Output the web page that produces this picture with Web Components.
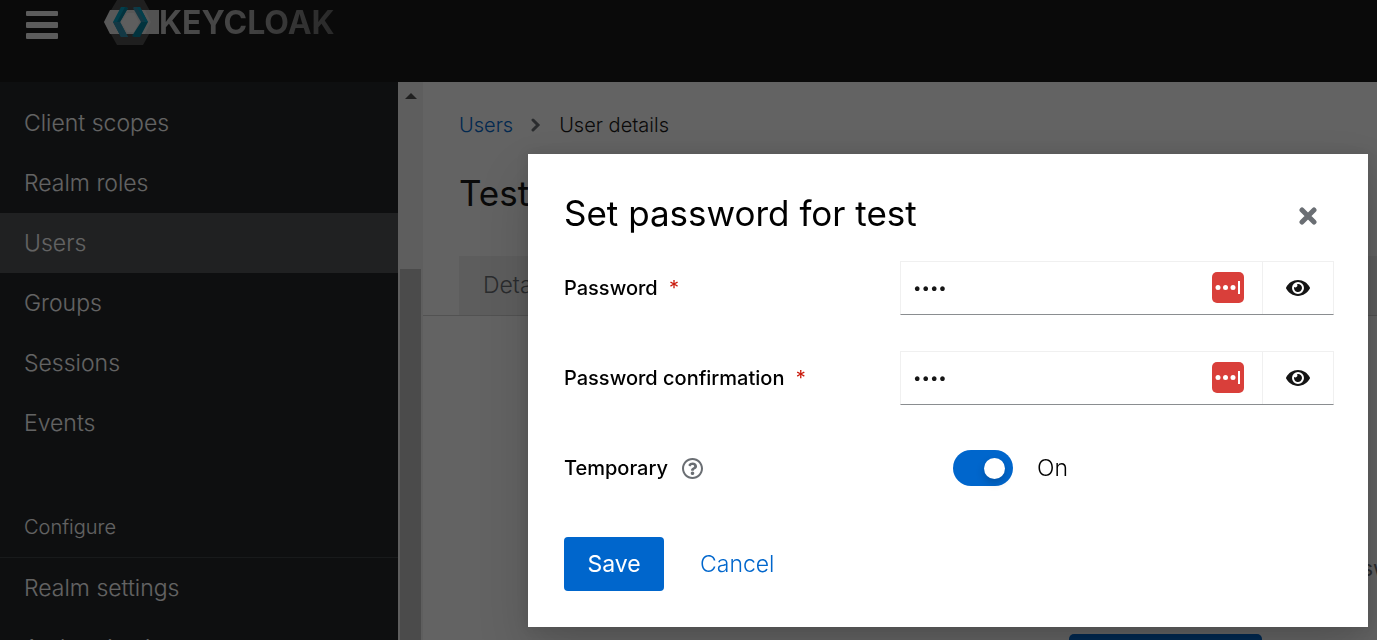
<!DOCTYPE html>
<html lang="en">
<head>
<meta charset="utf-8">
<title>Keycloak Administration Console</title>
<style>
  html, body { margin: 0; height: 100%; }
  body { font-family: Inter, "Open Sans", sans-serif; color: #151515; overflow: hidden; background: #fff; }
</style>
</head>
<body>
<kc-app></kc-app>
<script>
const define = (name, html) => {
  const tpl = document.createElement('template');
  tpl.innerHTML = html;
  customElements.define(name, class extends HTMLElement {
    constructor() {
      super();
      this.attachShadow({ mode: 'open' }).append(tpl.content.cloneNode(true));
    }
  });
};

define('kc-logo', `
<style>
  :host { display: flex; align-items: center; }
  svg { display: block; }
  span { font-size: 32px; line-height: 40px; font-weight: 700; color: transparent;
    background: linear-gradient(90deg, #c4c4c4, #a8a8a8 50%, #666); background-clip: text; -webkit-background-clip: text; }
</style>
<svg width="56" height="46" viewBox="0 0 56 46" aria-hidden="true">
  <path fill="#4d4d4d" d="M14 0h27l12 22-13 23H14L1 22z"/>
  <path fill="#e2e2e2" d="M7 10h49v24H7L1 22z"/>
  <path fill="#d2d2d2" d="M42 10h14v24H42l6-12z"/>
  <path fill="#f2f2f2" d="M24 13h7l5 9-5 10h-7l-6-10z"/>
  <path fill="#00a0c2" d="M18 7h4l3 1-8 14 8 15h-7l-8-15z"/>
  <path fill="#2f8fad" d="M10 22h7l8 15h-7z"/>
  <path fill="#00819e" d="M22 7l3 1-8 14h-3z"/>
  <path fill="#2f8fad" d="M31 7h6l8 15h-7l-8-14z"/>
  <path fill="#00819e" d="M38 22h7l-8 15h-6l-2-1z"/>
  <path fill="#00a0c2" d="M37 7l8 15h-3L34 7z"/>
</svg>
<span>KEYCLOAK</span>`);

define('kc-masthead', `
<style>
  :host { display: block; height: 82px; background: #151515; flex: none; }
  div { display: flex; align-items: center; height: 46px; padding-left: 26px; gap: 45px; }
  button { border: 0; padding: 4px 0 0; background: none; display: block; }
  svg { display: block; }
</style>
<div>
  <button aria-label="Global navigation">
    <svg width="32" height="28" viewBox="0 0 32 28" fill="#ededed"><rect width="32" height="5" rx="1"/><rect y="11" width="32" height="6" rx="1"/><rect y="22" width="32" height="6" rx="1"/></svg>
  </button>
  <kc-logo></kc-logo>
</div>`);

define('kc-nav-item', `
<style>
  :host { display: block; }
  a { display: block; padding: 0 24px; font-size: 23px; line-height: 60px; font-weight: 300; color: #fff; text-decoration: none; }
  :host([current]) a { background: #4f5255; }
</style>
<a href="#"><slot></slot></a>`);

define('kc-sidebar', `
<style>
  :host { display: flex; flex: none; width: 423px; overflow: hidden; background: #f1f1f1; }
  nav { flex: 1; padding-top: 11px; background: #212427; }
  h2 { margin: 45px 0 0; padding: 0 24px; font-size: 20px; line-height: 59px; font-weight: 300; color: #fff; border-bottom: 1px solid #3c3f42; }
  .bar { width: 21px; padding: 11px 2px 0; display: flex; flex-direction: column; align-items: center; gap: 170px; }
  .bar i { flex: 1; width: 100%; background: #c1c1c1; }
  svg { display: block; flex: none; }
</style>
<nav>
  <kc-nav-item>Client scopes</kc-nav-item>
  <kc-nav-item>Realm roles</kc-nav-item>
  <kc-nav-item current>Users</kc-nav-item>
  <kc-nav-item>Groups</kc-nav-item>
  <kc-nav-item>Sessions</kc-nav-item>
  <kc-nav-item>Events</kc-nav-item>
  <h2>Configure</h2>
  <kc-nav-item>Realm settings</kc-nav-item>
  <kc-nav-item>Authentication</kc-nav-item>
</nav>
<div class="bar"><svg width="12" height="6"><path fill="#505050" d="M0 6l6-6 6 6z"/></svg><i></i></div>`);

define('kc-breadcrumb', `
<style>
  :host { display: flex; align-items: center; gap: 18px; font-size: 20px; line-height: 34px; font-weight: 300; }
  a { color: #06c; text-decoration: none; }
  svg { display: block; }
</style>
<a href="#">Users</a>
<svg width="10" height="14" viewBox="0 0 10 14" fill="none" stroke="#6a6e73" stroke-width="3" stroke-linecap="round"><path d="M2 2l5 5-5 5"/></svg>
<span>User details</span>`);

define('kc-empty-state', `
<style>
  :host { display: flex; flex-direction: column; align-items: center; width: 1485px; padding-top: 234px; }
  p { margin: 0 0 48px; font-size: 22px; line-height: 36px; font-weight: 400; color: #6a6e73; white-space: nowrap; }
  button { border: 0; border-radius: 5px; padding: 0 22px; font: 400 23px/54px Inter, sans-serif; color: #fff; background: #06c; }
</style>
<p>This user does not have any credentials. You can set password for this user.</p>
<button>Set password</button>`);

define('kc-user-page', `
<style>
  :host { display: block; flex: 1; min-width: 0; overflow: hidden; background: #fff; }
  header { padding: 26px 0 0 36px; }
  h1 { margin: 26px 0 38px; font-size: 35px; line-height: 50px; font-weight: 400; }
  .tabs { display: flex; padding-left: 36px; border-bottom: 1px solid #d2d2d2; }
  .tabs button { flex: 1; text-align: left; border: 0; margin: 0; padding: 0 24px; background: #f0f0f0; color: #6a6e73; font: 300 23px/59px Inter, sans-serif; }
</style>
<header><kc-breadcrumb></kc-breadcrumb><h1>Test</h1></header>
<div class="tabs" role="tablist"><button role="tab">Details</button></div>
<kc-empty-state></kc-empty-state>`);

define('kc-password-field', `
<style>
  :host { display: grid; grid-template-columns: 336px 1fr; align-items: center; }
  label { font-size: 20px; line-height: 30px; font-weight: 500; }
  label b { margin-left: 6px; font-weight: 400; color: #c9190b; }
  .group { display: flex; position: relative; height: 54px; box-sizing: border-box; border: 1px solid #f0f0f0; border-bottom-color: #8a8d90; }
  input { flex: 1; min-width: 0; border: 0; padding: 0 12px; background: none; color: #151515; font: 400 15px/30px Inter, sans-serif; outline: 0; }
  button { flex: none; width: 71px; border: 0; border-left: 1px solid #f0f0f0; padding: 0; background: none; display: grid; place-items: center; }
  .fill { position: absolute; right: 89px; top: 10px; }
  svg { display: block; }
</style>
<label for="pw"><slot></slot> <b aria-hidden="true">*</b></label>
<div class="group">
  <input id="pw" type="password" value="test">
  <svg class="fill" width="32" height="31" viewBox="0 0 32 31" aria-hidden="true"><rect width="32" height="31" rx="5" fill="#d93f3a"/><g fill="#fff"><circle cx="6" cy="15.500" r="2.500"/><circle cx="13.500" cy="15.500" r="2.500"/><circle cx="21" cy="15.500" r="2.500"/><path d="M26 9h2v13h-2z"/></g></svg>
  <button aria-label="Show password"><svg width="24" height="22" viewBox="0 0 576 512" fill="#151515"><path d="M572.520 241.400C518.290 135.590 410.930 64 288 64S57.680 135.640 3.480 241.410a32.350 32.350 0 0 0 0 29.190C57.710 376.410 165.070 448 288 448s230.320-71.640 284.520-177.410a32.350 32.350 0 0 0 0-29.190zM288 400a144 144 0 1 1 144-144 143.930 143.930 0 0 1-144 144zm0-240a95.310 95.310 0 0 0-25.310 3.790 47.850 47.850 0 0 1-66.900 66.900A95.780 95.780 0 1 0 288 160z"/></svg></button>
</div>`);

define('kc-switch-field', `
<style>
  :host { display: grid; grid-template-columns: 389px 1fr; align-items: center; height: 54px; }
  .name, .toggle { display: flex; align-items: center; }
  .name { gap: 14px; font-size: 20px; line-height: 30px; font-weight: 500; }
  .toggle { gap: 24px; font-size: 23px; line-height: 36px; font-weight: 300; }
  .name button { border: 0; padding: 0; background: none; }
  svg { display: block; }
  input { appearance: none; margin: 0; width: 60px; height: 36px; border-radius: 18px; background: #06c; display: grid; align-items: center; justify-items: end; padding: 0 8px; box-sizing: border-box; }
  input::before { content: ""; width: 21px; height: 21px; border-radius: 50%; background: #fff; box-shadow: 0 4px 8px rgba(3,3,3,.2); }
</style>
<div class="name"><label for="sw"><slot></slot></label>
<button aria-label="More info"><svg width="21" height="21" viewBox="8 8 496 496" fill="#6a6e73"><path d="M256 8C119.043 8 8 119.083 8 256c0 136.997 111.043 248 248 248s248-111.003 248-248C504 119.083 392.957 8 256 8zm0 448c-110.532 0-200-89.431-200-200 0-110.495 89.472-200 200-200 110.491 0 200 89.471 200 200 0 110.530-89.431 200-200 200zm107.244-255.200c0 67.052-72.421 68.084-72.421 92.863V300c0 6.627-5.373 12-12 12h-45.647c-6.627 0-12-5.373-12-12v-8.659c0-35.745 27.100-50.034 47.579-61.516 17.561-9.845 28.324-16.541 28.324-29.579 0-17.246-21.999-28.693-39.784-28.693-23.189 0-33.894 10.977-48.942 29.969-4.057 5.120-11.460 6.071-16.666 2.124l-27.824-21.098c-5.107-3.872-6.251-11.066-2.644-16.363C184.846 131.491 214.940 112 261.794 112c49.071 0 101.450 38.304 101.450 88.800zM298 368c0 23.159-18.841 42-42 42s-42-18.841-42-42 18.841-42 42-42 42 18.841 42 42z"/></svg></button></div>
<div class="toggle"><input id="sw" type="checkbox" role="switch" checked><span>On</span></div>`);

define('kc-modal', `
<style>
  :host { display: block; box-sizing: border-box; width: 840px; padding: 36px 34px 36px 36px; background: #fff; color: #000;
    box-shadow: 0 24px 48px rgba(3,3,3,.16), 0 0 12px rgba(3,3,3,.1); }
  header { display: flex; align-items: center; justify-content: space-between; padding-right: 17px; margin-bottom: 24px; }
  h2 { margin: 0; font-size: 35px; line-height: 47px; font-weight: 400; }
  header button { border: 0; padding: 4px 0 0; background: none; }
  svg { display: block; }
  form { display: flex; flex-direction: column; gap: 36px; }
  footer { display: flex; gap: 36px; margin-top: 6px; }
  footer button { border: 0; padding: 0; background: none; color: #06c; font: 300 23px/54px Inter, sans-serif; }
  footer .primary { width: 100px; border-radius: 4px; background: #06c; color: #fff; font-weight: 400; }
</style>
<header><h2><slot name="title"></slot></h2>
<button aria-label="Close"><svg width="18" height="18" viewBox="0 0 18 18" stroke="#6a6e73" stroke-width="5" stroke-linecap="round"><path d="M3 3l12 12M15 3L3 15"/></svg></button></header>
<form><slot></slot>
<footer><button type="button" class="primary">Save</button><button type="button">Cancel</button></footer></form>`);

define('kc-app', `
<style>
  :host { display: flex; flex-direction: column; height: 100vh; }
  .body { display: flex; flex: 1; min-height: 0; }
  .backdrop { position: fixed; inset: 0; display: flex; align-items: flex-start; justify-content: flex-end; padding: 154px 9px 0 0; background: rgba(3,3,3,.62); }
</style>
<kc-masthead></kc-masthead>
<div class="body"><kc-sidebar></kc-sidebar><kc-user-page></kc-user-page></div>
<div class="backdrop">
  <kc-modal role="dialog" aria-modal="true">
    <span slot="title">Set password for test</span>
    <kc-password-field>Password</kc-password-field>
    <kc-password-field>Password confirmation</kc-password-field>
    <kc-switch-field>Temporary</kc-switch-field>
  </kc-modal>
</div>`);
</script>
</body>
</html>
